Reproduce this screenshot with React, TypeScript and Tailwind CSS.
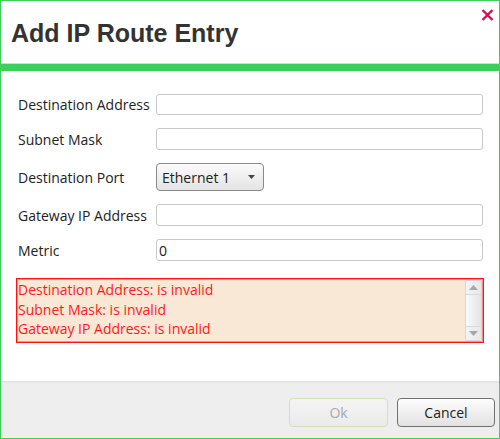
import { useState } from "react";

const labelFont = { fontFamily: '"Open Sans", "Noto Sans", sans-serif' };

function Field({ label, value, h = "h-[22px]" }: { label: string; value?: string; h?: string }) {
  return (
    <div className="flex items-center">
      <label className="w-[138px] shrink-0 text-[14px] text-[#222]">{label}</label>
      <input
        defaultValue={value}
        className={`${h} w-[327px] rounded-[3px] border border-[#c9c9c9] bg-white px-[2px] text-[14px] text-[#222] outline-none`}
      />
    </div>
  );
}

export default function App() {
  const [port, setPort] = useState("Ethernet 1");

  return (
    <div
      className="flex h-[439px] w-[500px] flex-col overflow-hidden border border-[#3ecf5a] bg-white"
      style={labelFont}
    >
      {/* header */}
      <header className="relative h-[62px] shrink-0">
        <h1
          className="pl-[10px] pt-[16px] text-[25px] font-bold leading-[32px] text-[#333]"
          style={{ fontFamily: '"Liberation Sans", Arial, sans-serif' }}
        >
          Add IP Route Entry
        </h1>
        <button className="absolute right-[5px] top-[7px] flex h-[14px] w-[14px] items-center justify-center">
          <svg width="13" height="12" viewBox="0 0 13 12">
            <path d="M1.5 1 L11.5 11 M11.5 1 L1.5 11" stroke="#d3104f" strokeWidth="2.4" />
          </svg>
        </button>
      </header>
      <div className="h-[1px] shrink-0 bg-[#b8ecc3]" />
      <div className="h-[7px] shrink-0 bg-[#3ecf5a]" />

      {/* body */}
      <div className="flex flex-1 flex-col px-[15px] pt-[23px]">
        <div className="flex flex-col gap-[13px] pl-[2px]">
          <Field label="Destination Address" h="h-[21px]" />
          <Field label="Subnet Mask" />
          <div className="flex items-center">
            <label className="w-[138px] shrink-0 text-[14px] text-[#222]">Destination Port</label>
            <button
              onClick={() => setPort(port)}
              className="flex h-[28px] w-[108px] items-center justify-between rounded-[4px] border border-[#8a8a8a] bg-gradient-to-b from-[#fbfbfb] to-[#e4e4e4] pl-[5px] pr-[8px] text-[14px] text-[#222]"
            >
              <span>{port}</span>
              <svg width="7" height="4" viewBox="0 0 7 4">
                <path d="M0 0 H7 L3.5 4 Z" fill="#444" />
              </svg>
            </button>
          </div>
          <Field label="Gateway IP Address" />
          <Field label="Metric" value="0" />
        </div>

        <div className="mt-[17px] flex h-[65px] border border-[#ff1414] bg-[#f9e8d6] shadow-[inset_0_0_0_1px_#ff8a8a]">
          <div className="flex-1 pl-[1px] pt-[1px] text-[14px] leading-[19.5px] text-[#ff1a1a]">
            <div>Destination Address: is invalid</div>
            <div>Subnet Mask: is invalid</div>
            <div>Gateway IP Address: is invalid</div>
          </div>
          <div className="m-[1px] flex w-[17px] flex-col rounded-[2px] border border-[#d8d8d8] bg-gradient-to-r from-[#f4f4f4] to-[#e8e8e8]">
            <div className="flex h-[14px] items-center justify-center border-b border-[#d8d8d8]">
              <svg width="9" height="5" viewBox="0 0 9 5">
                <path d="M0 5 L4.5 0 L9 5 Z" fill="#a8a8a8" />
              </svg>
            </div>
            <div className="flex-1 bg-gradient-to-r from-[#fafafa] to-[#e4e4e4]" />
            <div className="flex h-[14px] items-center justify-center border-t border-[#d8d8d8]">
              <svg width="9" height="5" viewBox="0 0 9 5">
                <path d="M0 0 L9 0 L4.5 5 Z" fill="#a8a8a8" />
              </svg>
            </div>
          </div>
        </div>
      </div>

      {/* footer */}
      <div className="h-[2px] shrink-0 bg-[#e4e4e4]" />
      <footer className="flex h-[55px] shrink-0 items-start justify-end gap-[9px] bg-[#eeeeee] pr-[4px] pt-[15px]">
        <button
          disabled
          className="h-[29px] w-[99px] rounded-[4px] border border-[#cfe3b9] bg-gradient-to-b from-[#f4f4f4] to-[#ebebeb] text-[14px] text-[#a8a8a8]"
        >
          Ok
        </button>
        <button className="h-[29px] w-[98px] rounded-[4px] border border-[#707070] bg-gradient-to-b from-[#fdfdfd] to-[#e2e2e2] text-[14px] text-[#222]">
          Cancel
        </button>
      </footer>
    </div>
  );
}
